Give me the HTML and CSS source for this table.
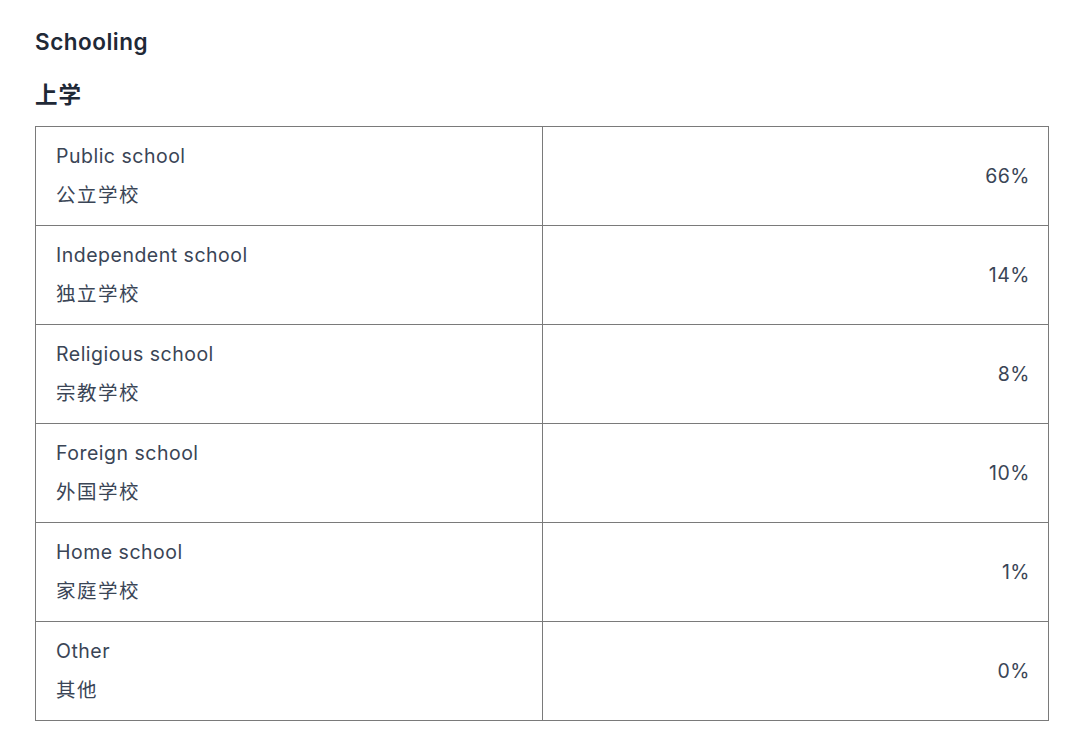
FILE: index.html
```html
<!DOCTYPE html>
<html lang="en">
<head>
<meta charset="utf-8">
<link rel="stylesheet" href="styles.css">
</head>
<body>
<div class="page">
  <h2 class="title">Schooling</h2>
  <h3 class="subtitle">上学</h3>
  <table class="data">
    <tr><td class="label"><div>Public school</div><div class="zh">公立学校</div></td><td class="val">66%</td></tr>
    <tr><td class="label"><div>Independent school</div><div class="zh">独立学校</div></td><td class="val">14%</td></tr>
    <tr><td class="label"><div>Religious school</div><div class="zh">宗教学校</div></td><td class="val">8%</td></tr>
    <tr><td class="label"><div>Foreign school</div><div class="zh">外国学校</div></td><td class="val">10%</td></tr>
    <tr><td class="label"><div>Home school</div><div class="zh">家庭学校</div></td><td class="val">1%</td></tr>
    <tr><td class="label"><div>Other</div><div class="zh">其他</div></td><td class="val">0%</td></tr>
  </table>
</div>
</body>
</html>
```
FILE: styles.css
```css
html, body { margin: 0; padding: 0; background: #fff; }
body { font-family: Inter, "Noto Sans CJK SC", sans-serif; color: #2d3748; }
.page { padding: 27px 32px 0 35px; }
.title { margin: 0; font-size: 22.5px; font-weight: 600; line-height: 30px; letter-spacing: 0.5px; color: #1f2937; }
.subtitle { margin: 23px 0 0; font-size: 22.5px; font-weight: 600; line-height: 30px; letter-spacing: 1px; color: #1f2937; }
.data { margin-top: 16px; width: 1014px; border-collapse: collapse; font-size: 19.5px; letter-spacing: 0.5px; color: #3a4556; }
.data td { border: 1px solid #7a7a7a; }
.label { width: 466px; padding: 10px 20px 10px; line-height: 39px; vertical-align: top; }
.zh { letter-spacing: 1.5px; }
.val { text-align: right; padding: 0 18px 0 20px; vertical-align: middle; }
```
